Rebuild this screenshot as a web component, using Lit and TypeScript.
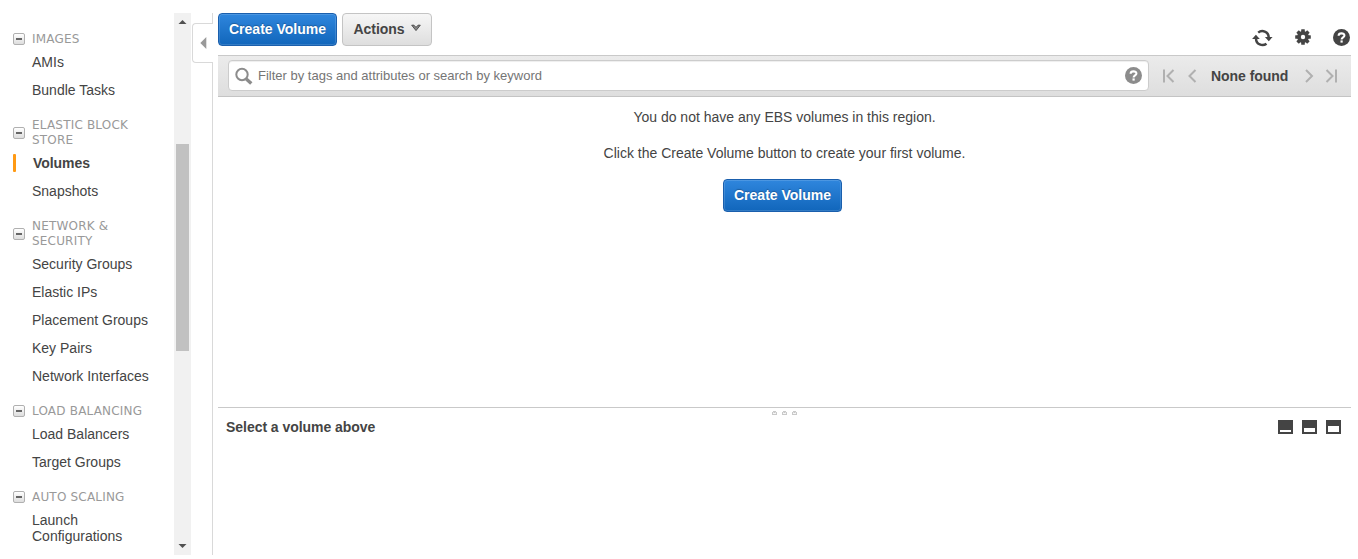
import { LitElement, html, css, svg } from "lit";
import { customElement } from "lit/decorators.js";
import { classMap } from "lit/directives/class-map.js";

const groups: { lines: string[]; items: string[][] }[] = [
  { lines: ["IMAGES"], items: [["AMIs"], ["Bundle Tasks"]] },
  { lines: ["ELASTIC BLOCK", "STORE"], items: [["Volumes"], ["Snapshots"]] },
  {
    lines: ["NETWORK &", "SECURITY"],
    items: [["Security Groups"], ["Elastic IPs"], ["Placement Groups"], ["Key Pairs"], ["Network Interfaces"]],
  },
  { lines: ["LOAD BALANCING"], items: [["Load Balancers"], ["Target Groups"]] },
  { lines: ["AUTO SCALING"], items: [["Launch", "Configurations"]] },
];

const helpIcon = (color: string) => html`<svg width="17" height="17" viewBox="0 0 17 17">
  <circle cx="8.5" cy="8.5" r="8.5" fill=${color}></circle>
  <path d="M5.6 6.7C5.7 3.6 11.5 3.6 11.4 6.6C11.3 8.3 8.6 8.4 8.6 10.4" fill="none" stroke="#fff" stroke-width="2.1"></path>
  <rect x="7.5" y="11.4" width="2.2" height="2.2" fill="#fff"></rect>
</svg>`;

@customElement("app-sidebar")
class AppSidebar extends LitElement {
  static styles = css`
    :host { display: block; width: 174px; height: 542px; overflow: hidden; box-sizing: border-box; padding-top: 5px; }
    .group { padding-top: 14px; }
    .head { display: flex; align-items: center; padding: 0 0 1px 13px; font: 12px/15px "DejaVu Sans", sans-serif; color: #999; letter-spacing: 0.19px; white-space: nowrap; }
    .box { width: 12px; height: 12px; box-sizing: border-box; border: 1px solid #b0b0b0; border-radius: 2px; background: linear-gradient(#fff, #ddd); margin: 0 7px 1px 0; display: grid; place-items: center; }
    .dash { width: 6px; height: 2px; background: #666; }
    .item { display: flex; padding: 6px 0; font-size: 14px; line-height: 16px; color: #444; white-space: nowrap; }
    .mark { width: 3px; height: 18px; margin: -1px 16px -1px 13px; border-radius: 1px; }
    .active { font-weight: bold; letter-spacing: -0.05px; }
    .active .mark { background: #ff9a14; margin-right: 17px; }
  `;
  render() {
    return groups.map(
      (g) => html`<div class="group">
        <div class="head"><span class="box"><span class="dash"></span></span>
          <div>${g.lines.map((l) => html`<div>${l}</div>`)}</div></div>
        ${g.items.map(
          (i) => html`<div class=${classMap({ item: true, active: i[0] === "Volumes" })}>
            <span class="mark"></span><div>${i.map((l) => html`<div>${l}</div>`)}</div></div>`
        )}
      </div>`
    );
  }
}

@customElement("app-root")
class AppRoot extends LitElement {
  static styles = css`
    :host { display: block; height: 559px; overflow: hidden; background: #fff; font: 14px/16px "Liberation Sans", Arial, sans-serif; color: #444; box-sizing: border-box; padding-top: 13px; }
    svg { display: block; flex: none; }
    .page { display: flex; height: 542px; }
    .scroll { width: 17px; background: #f1f1f1; display: flex; flex-direction: column; align-items: center; box-sizing: border-box; padding: 7px 0; }
    .thumb { width: 13px; height: 207px; background: #c1c1c1; margin: 120px 0 auto; }
    .rail { width: 22px; margin-right: 5px; display: flex; flex-direction: column; align-items: flex-end; }
    .edge { width: 1px; background: #d9d9d9; }
    .edge-top { height: 10px; }
    .edge-rest { flex: 1; }
    .tab { width: 21px; height: 40px; box-sizing: border-box; border: 1px solid #d9d9d9; border-right: 0; border-radius: 4px 0 0 4px; padding: 13px 0 0 7px; }
    .main { width: 1133px; display: flex; flex-direction: column; }
    .toolbar { height: 42px; display: flex; align-items: flex-start; }
    .btn { font: bold 14px/16px "Liberation Sans", Arial, sans-serif; height: 33px; box-sizing: border-box; border-radius: 4px; padding: 0 0 1px; display: flex; align-items: center; justify-content: center; white-space: nowrap; }
    .primary { width: 119px; color: #fff; border: 1px solid #1a5fad; background: linear-gradient(#2f86dd, #1166bb); box-shadow: inset 0 0 0 1px rgba(255, 255, 255, 0.14); text-shadow: 0 -1px 1px rgba(0, 0, 0, 0.25); }
    .secondary { width: 90px; margin-left: 5px; color: #444; border: 1px solid #c4c4c4; background: linear-gradient(#f6f6f6, #dedede); gap: 6px; letter-spacing: -0.05px; }
    .chev { margin-top: -2px; }
    .tools { margin: 16px 1px 0 auto; display: flex; }
    .refresh { margin-right: 22px; }
    .gear { margin-right: 22px; }
    .filter { height: 42px; box-sizing: border-box; border-top: 1px solid #c9c9c9; border-bottom: 1px solid #c4c4c4; background: linear-gradient(#ebebeb, #dedede); display: flex; padding: 4px 0 0 10px; }
    .search { width: 921px; height: 31px; box-sizing: border-box; border: 1px solid #ccc; border-radius: 4px; background: #fff; display: flex; align-items: center; padding: 0 6px; box-shadow: inset 0 1px 1px #eee; }
    .ph { font-size: 13px; color: #757575; margin: 0 auto 0 5px; white-space: nowrap; }
    .pager { display: flex; align-items: center; height: 31px; margin-left: 14px; }
    .none { font-weight: bold; margin: 0 17px 0 14px; white-space: nowrap; letter-spacing: -0.05px; }
    .empty { height: 310px; display: flex; flex-direction: column; align-items: center; box-sizing: border-box; padding-top: 12px; }
    .line { margin-bottom: 20px; white-space: nowrap; }
    .create { margin: -2px 4px 0 0; }
    .detail { border-top: 1px solid #c9c9c9; }
    .grip { display: flex; justify-content: center; gap: 5px; padding-top: 3px; height: 5px; }
    .row { display: flex; align-items: center; padding: 3px 10px 0 8px; font-weight: bold; letter-spacing: -0.04px; }
    .views { margin-left: auto; display: flex; gap: 9px; }
  `;

  render() {
    return html`<div class="page">
      <app-sidebar></app-sidebar>
      <div class="scroll">
        <svg width="9" height="4" viewBox="0 0 9 4"><path d="M.5 4L4.5 0L8.5 4Z" fill="#505050"></path></svg>
        <div class="thumb"></div>
        <svg width="9" height="4" viewBox="0 0 9 4"><path d="M.5 0L4.5 4L8.5 0Z" fill="#505050"></path></svg>
      </div>
      <div class="rail">
        <div class="edge edge-top"></div>
        <div class="tab"><svg width="7" height="12" viewBox="0 0 7 12"><path d="M6.3 0V12L.3 6Z" fill="#999"></path></svg></div>
        <div class="edge edge-rest"></div>
      </div>
      <div class="main">
        <div class="toolbar">
          <button class="btn primary">Create Volume</button>
          <button class="btn secondary">Actions
            <svg class="chev" width="10" height="8" viewBox="0 0 10 8"><path d="M.7 1.2H3L5 3.4L7 1.2H9.3L5 6.6Z" fill="#888" stroke="#444" stroke-width=".9"></path></svg>
          </button>
          <div class="tools">
            <svg class="refresh" width="21" height="18" viewBox="0 0 21 18">
              <path d="M6.2 3.6C10 .5 16.5 2.4 16.7 8.4M14.5 14.7C10.5 17.7 4.1 15.5 4 9.4" fill="none" stroke="#444" stroke-width="2.5"></path>
              <path d="M12.9 8H20.6L16.8 12.2ZM.1 9.9H7.8L3.9 5.7Z" fill="#444"></path>
            </svg>
            <svg class="gear" width="16" height="16" viewBox="0 0 16 16">
              ${[0, 45, 90, 135].map((a) => svg`<rect x="6.2" y=".2" width="3.6" height="15.6" rx=".5" fill="#444" transform=${`rotate(${a} 8 8)`}></rect>`)}
              <circle cx="8" cy="8" r="5.9" fill="#444"></circle><circle cx="8" cy="8" r="2.2" fill="#fff"></circle>
            </svg>
            ${helpIcon("#444")}
          </div>
        </div>
        <div class="filter">
          <div class="search">
            <svg width="18" height="18" viewBox="0 0 18 18"><circle cx="7" cy="7.5" r="5.7" fill="none" stroke="#8c8c8c" stroke-width="2"></circle><path d="M11.3 12L16.3 16.5" stroke="#8c8c8c" stroke-width="3.4"></path></svg>
            <span class="ph">Filter by tags and attributes or search by keyword</span>
            ${helpIcon("#8c8c8c")}
          </div>
          <div class="pager">
            <svg width="34" height="14" viewBox="0 0 34 14"><path d="M1 .5V13.5M10.5 1L4.5 7L10.5 13M32.5 1L26.5 7L32.5 13" fill="none" stroke="#b0b0b0" stroke-width="2"></path></svg>
            <span class="none">None found</span>
            <svg width="32" height="14" viewBox="0 0 32 14"><path d="M1 1L7 7L1 13M21.5 1L27.5 7L21.5 13M31 .5V13.5" fill="none" stroke="#b0b0b0" stroke-width="2"></path></svg>
          </div>
        </div>
        <div class="empty">
          <div class="line">You do not have any EBS volumes in this region.</div>
          <div class="line">Click the Create Volume button to create your first volume.</div>
          <button class="btn primary create">Create Volume</button>
        </div>
        <div class="detail">
          <div class="grip">
            ${[0, 1, 2].map(() => html`<svg width="5" height="4" viewBox="0 0 5 4"><path d="M0 4V1H1V0H4V1H5V4Z" fill="#c9c9c9"></path><path d="M1 3V1.5H2V2H3V1.5H4V3Z" fill="#f6f6f6"></path></svg>`)}
          </div>
          <div class="row">Select a volume above
            <div class="views">
              ${[2, 4, 6].map((h) => html`<svg width="15" height="14" viewBox="0 0 15 14"><rect width="15" height="14" fill="#444"></rect><rect x="2" y=${12 - h} width="11" height=${h} fill="#fff"></rect></svg>`)}
            </div>
          </div>
        </div>
      </div>
    </div>`;
  }
}
